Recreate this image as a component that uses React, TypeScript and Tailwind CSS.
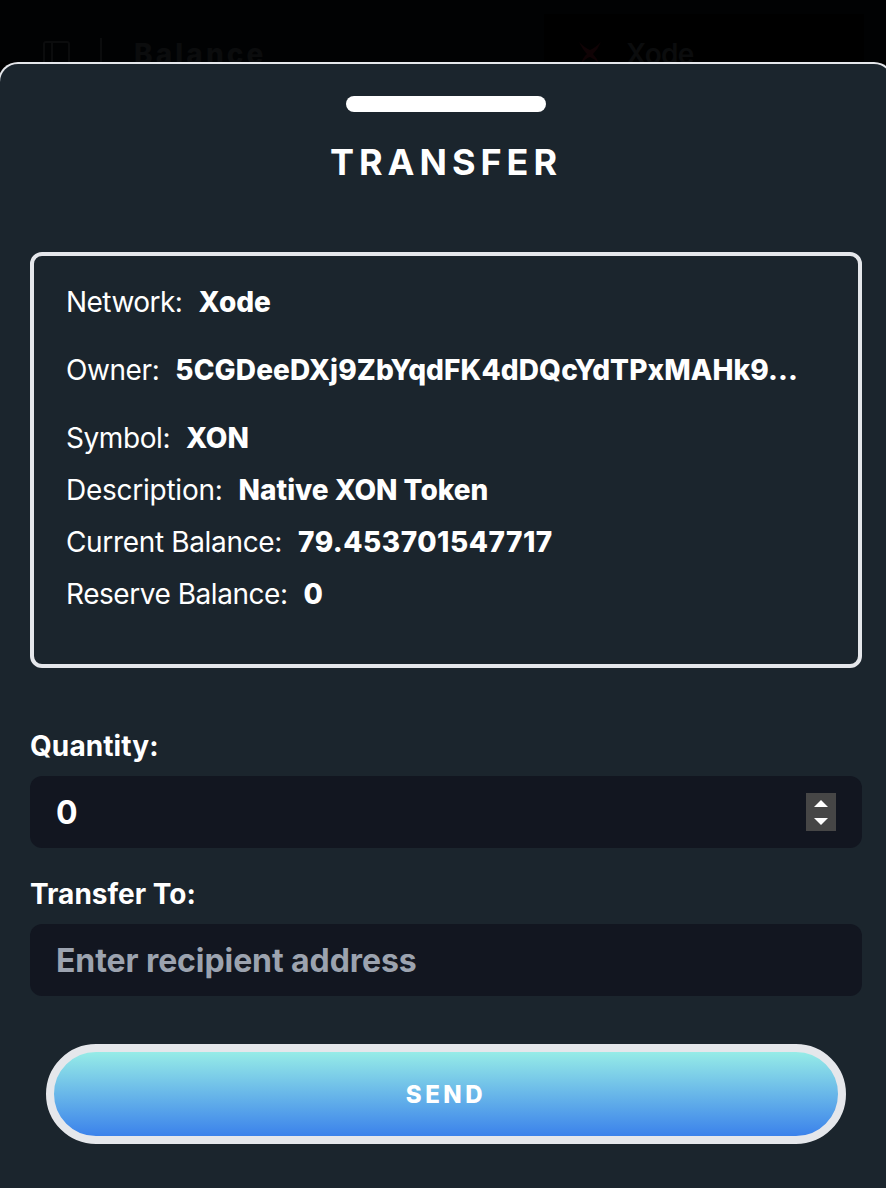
import type { ReactNode } from "react";
import { useState } from "react";

function Detail({ label, children, className = "" }: { label: string; children: ReactNode; className?: string }) {
  return (
    <div className={`flex h-9 items-center text-[28px] leading-9 whitespace-nowrap ${className}`}>
      {label}
      <span className="ml-4 font-extrabold">{children}</span>
    </div>
  );
}

export default function App() {
  const [quantity, setQuantity] = useState(0);
  return (
    <div className="flex h-[1188px] w-full flex-col overflow-hidden bg-black font-['Inter',sans-serif] text-white">
      <header className="flex h-[62px] shrink-0 items-start bg-[#010203] pt-[38px] text-[#0b0c0d]">
        <svg className="ml-[41px] h-8 w-8 shrink-0" viewBox="0 0 32 32" fill="none" stroke="currentColor" strokeWidth="2">
          <rect x="3" y="4" width="25" height="26" rx="2" />
          <path d="M11 4v26" />
        </svg>
        <div className="ml-[27px] h-6 w-0.5 bg-[#0b0c0d]" />
        <span className="ml-8 w-[410px] text-[28px] leading-8 font-extrabold tracking-[3.1px]">Balance</span>
        <div className="-mt-6 flex h-12 w-[320px] items-start bg-black pt-6">
          <svg className="mt-1 ml-[34px] h-6 w-6 shrink-0 text-[#100305]" viewBox="0 0 24 24" fill="currentColor">
            <path d="M1 0Q5 8 9 12Q5 15 3 22Q8 16 12 15Q17 17 21 22Q19 16 15 12Q20 7 23 0Q17 6 12 8Q7 6 1 0Z" />
          </svg>
          <span className="ml-6 text-[28px] leading-8 font-semibold tracking-[-0.7px]">Xode</span>
        </div>
      </header>
      <main className="-ml-0.5 flex w-[896px] flex-1 flex-col rounded-t-[20px] border-x-2 border-t-2 border-[#e5e7eb] bg-[#1b252d] px-[30px]">
        <div className="mt-8 h-4 w-[200px] shrink-0 self-center rounded-full bg-white" />
        <h1 className="mt-[30px] h-10 text-center text-4xl leading-10 font-bold tracking-[5px]">TRANSFER</h1>
        <section className="mt-[70px] h-[416px] shrink-0 rounded-xl border-4 border-[#e5e7eb] px-8 pt-7">
          <Detail label="Network:" className="tracking-[-0.53px]"><span className="tracking-normal">Xode</span></Detail>
          <Detail label="Owner:" className="mt-8 tracking-[-0.42px]"><span className="tracking-[0.12px]">5CGDeeDXj9ZbYqdFK4dDQcYdTPxMAHk9...</span></Detail>
          <Detail label="Symbol:" className="mt-8 tracking-[-0.42px]"><span className="tracking-[0.1px]">XON</span></Detail>
          <Detail label="Description:" className="mt-4 tracking-[-0.25px]"><span className="tracking-normal">Native XON Token</span></Detail>
          <Detail label="Current Balance:" className="mt-4 tracking-[-0.34px]"><span className="tracking-[0.5px]">79.453701547717</span></Detail>
          <Detail label="Reserve Balance:" className="mt-4 tracking-[-0.46px]"><span className="tracking-normal">0</span></Detail>
        </section>
        <label htmlFor="quantity" className="mt-[58px] h-10 text-[28px] leading-10 font-bold tracking-[0.1px]">Quantity:</label>
        <div className="mt-[10px] flex h-[72px] shrink-0 items-center rounded-xl bg-[#121620] px-[26px]">
          <input id="quantity" value={quantity} onChange={(e) => setQuantity(Number(e.target.value) || 0)} className="mt-[2px] min-w-0 flex-1 bg-transparent text-[32px] leading-10 font-bold outline-none" />
          <div className="flex h-[38px] w-[30px] flex-col bg-[#464646]">
            <button aria-label="Increase quantity" className="flex flex-1 items-center justify-center pt-px" onClick={() => setQuantity(quantity + 1)}>
              <svg className="h-[7px] w-[14px]" viewBox="0 0 14 7" fill="white"><path d="M0 7L7 0l7 7z" /></svg>
            </button>
            <button aria-label="Decrease quantity" className="flex flex-1 items-center justify-center pb-px" onClick={() => setQuantity(Math.max(0, quantity - 1))}>
              <svg className="h-[7px] w-[14px]" viewBox="0 0 14 7" fill="white"><path d="M0 0h14L7 7z" /></svg>
            </button>
          </div>
        </div>
        <label htmlFor="recipient" className="mt-[26px] h-10 text-[28px] leading-10 font-bold">Transfer To:</label>
        <input id="recipient" placeholder="Enter recipient address" className="mt-[10px] h-[72px] shrink-0 rounded-xl bg-[#121620] px-[26px] text-[32px] font-bold tracking-[-0.08px] outline-none placeholder:text-[#9ca3af]" />
        <button className="mx-4 mt-12 h-[100px] shrink-0 rounded-full border-8 border-[#e5e7eb] bg-[linear-gradient(#96ece7,#3b82eb)] pt-0.5 text-2xl font-extrabold tracking-[3.6px]">SEND</button>
      </main>
    </div>
  );
}
